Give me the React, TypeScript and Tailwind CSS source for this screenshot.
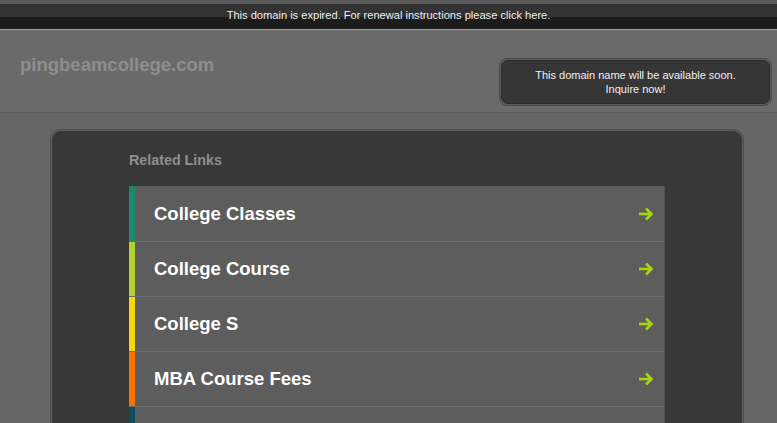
import React from "react";

const links = [
  { label: "College Classes", color: "#1b8a6b" },
  { label: "College Course", color: "#b3d12d" },
  { label: "College S", color: "#f8d808" },
  { label: "MBA Course Fees", color: "#ff7000" },
  { label: "", color: "#0c4d5e" },
];

function Arrow() {
  return (
    <svg width="16" height="14" viewBox="0 0 16 14" fill="none">
      <path d="M1 7H13.5" stroke="#a3d60c" strokeWidth="2.6" />
      <path d="M8 1.5L13.5 7L8 12.5" stroke="#a3d60c" strokeWidth="2.6" fill="none" />
    </svg>
  );
}

export default function App() {
  return (
    <div
      className="w-[777px] h-[423px] overflow-hidden bg-[#666666] flex flex-col"
      style={{ fontFamily: '"Liberation Sans", Arial, sans-serif' }}
    >
      <div className="shrink-0 h-[4px] bg-[#5a5a5a]" />
      <div className="shrink-0 relative h-[25px] bg-[linear-gradient(#333333_0,#333333_13px,#1c1c1c_13px)] flex items-center justify-center">
        <span className="text-[11.1px] text-white/95 leading-none mt-[-2px]">
          This domain is expired. For renewal instructions please click here.
        </span>
      </div>
      <div className="shrink-0 h-[1px] bg-[#a0a0a0]" />
      <div className="shrink-0 h-[83px] bg-[#6a6a6a] border-b border-[#5c5c5c] flex items-start justify-between pl-[20px] pr-[5px]">
        <div className="pt-[26px] text-[18.5px] font-bold text-[#8e8e8e] leading-none">
          pingbeamcollege.com
        </div>
        <div className="mt-[28px] w-[273px] h-[48px] rounded-[8px] border border-[#4c4c4c] p-[1px] bg-[#5a5a5a]">
          <div className="w-full h-full rounded-[7px] border border-[#2c2c2c] bg-[#363636] flex flex-col items-center justify-center text-[11px] leading-[14px] text-[#f0f0f0]">
            <span>This domain name will be available soon.</span>
            <span>Inquire now!</span>
          </div>
        </div>
      </div>
      <div className="shrink-0 mt-[16px] ml-[50px] w-[694px] h-[320px] rounded-t-[10px] border border-[#505050] bg-[#5a5a5a] p-[1px] pb-0">
        <div className="h-full rounded-t-[9px] border border-b-0 border-[#3c3c3c] bg-[#383838] pt-[21px] pl-[76px]">
          <div className="text-[14.3px] font-bold text-[#8f8f8f] leading-none">Related Links</div>
          <div className="mt-[19px] w-[536px] flex flex-col border-r border-[#505050]">
            {links.map((l, i) => (
              <div
                key={i}
                className={`shrink-0 flex h-[55px] bg-[#5d5d5d] ${i > 0 ? "border-t border-[#6b6b6b]" : ""}`}
              >
                <div className="w-[6px] h-full" style={{ backgroundColor: l.color }} />
                <div className="flex-1 flex items-center justify-between pl-[19px] pr-[10px]">
                  <span className="text-[18.5px] font-bold text-white">{l.label}</span>
                  {l.label && <Arrow />}
                </div>
              </div>
            ))}
          </div>
        </div>
      </div>
    </div>
  );
}
